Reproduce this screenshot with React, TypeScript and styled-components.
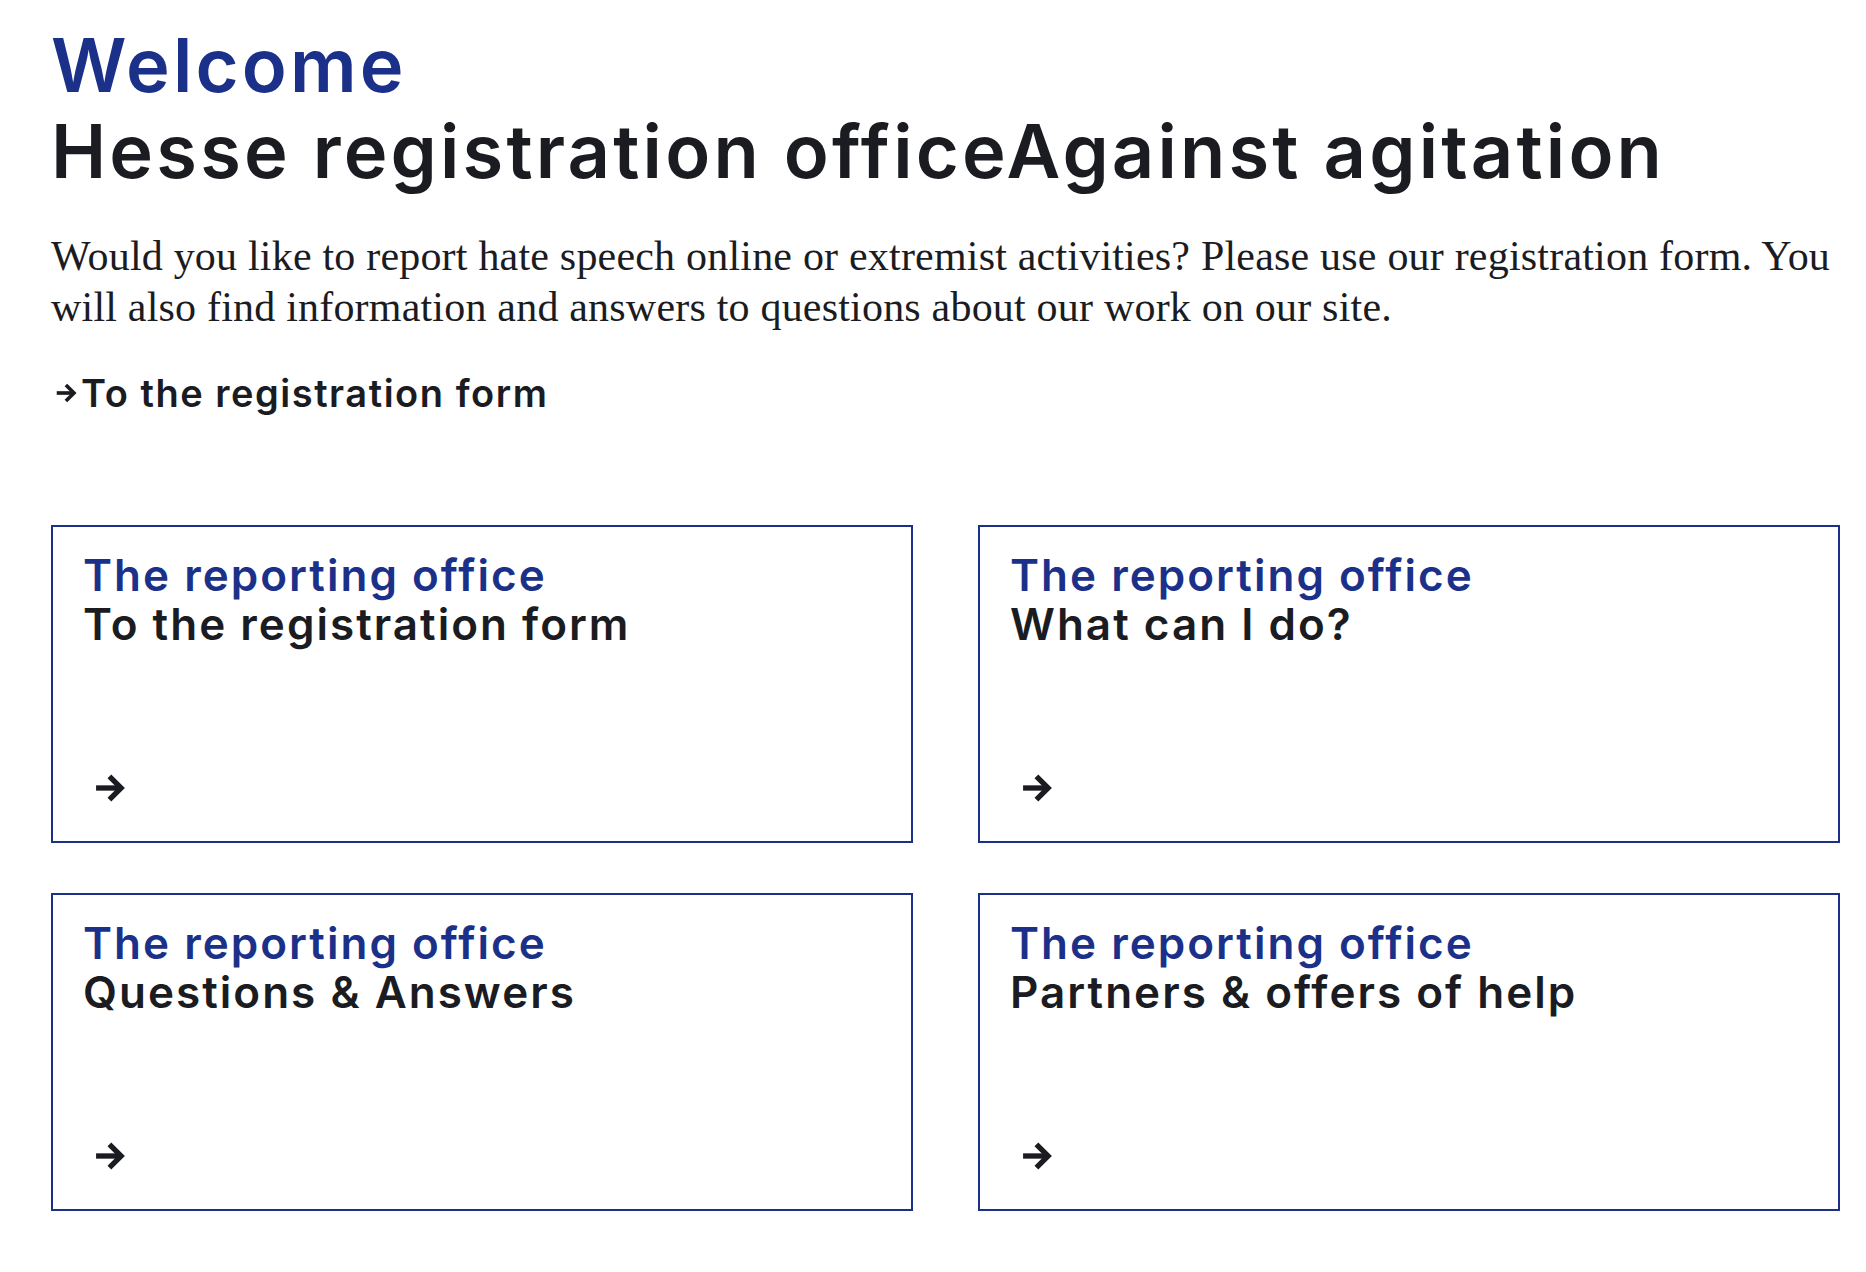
import React from "react";
import styled, {createGlobalStyle} from "styled-components";

const NAVY = "#1b3189";
const INK = "#1b1c21";

const GlobalStyle = createGlobalStyle`
	html, body {
		margin: 0;
		padding: 0;
		background: #ffffff;
	}
	body {
		font-family: Inter, "Liberation Sans", sans-serif;
		color: ${INK};
	}
`

interface Tile {
	id: number;
	title: string;
}

const TILES: Tile[] = [
	{id: 1, title: "To the registration form"},
	{id: 2, title: "What can I do?"},
	{id: 3, title: "Questions & Answers"},
	{id: 4, title: "Partners & offers of help"},
];

const Arrow = ({size = 30}: {size?: number}) => (
	<svg width={size} height={size} viewBox="0 0 30 30" fill="none" xmlns="http://www.w3.org/2000/svg">
		<path d="M1 15H24" stroke={INK} strokeWidth="5"/>
		<path d="M13.5 4L24.5 15L13.5 26" stroke={INK} strokeWidth="5" strokeLinejoin="miter"/>
	</svg>
)

export default function App() {
	return (
		<>
			<GlobalStyle/>
			<Page>
				<Headline>
					<Greeting>Welcome</Greeting>
					<Title>Hesse registration officeAgainst agitation</Title>
				</Headline>
				<Intro>
					Would you like to report hate speech online or extremist activities? Please use our registration form. You
					will also find information and answers to questions about our work on our site.
				</Intro>
				<FormLink href="#">
					<Arrow size={22}/>
					<span>To the registration form</span>
				</FormLink>
				<TileGrid>
					{TILES.map((tile) => (
						<TileCard key={tile.id} href="#">
							<TileHeading>
								<TileKicker>The reporting office</TileKicker>
								<TileTitle>{tile.title}</TileTitle>
							</TileHeading>
							<TileArrow>
								<Arrow size={32}/>
							</TileArrow>
						</TileCard>
					))}
				</TileGrid>
			</Page>
		</>
	)
}

const Page = styled.main`
	box-sizing: border-box;
	width: 1866px;
	padding: 22px 25px 60px 51px;
`

const Headline = styled.h1`
	margin: 0;
	font-weight: 600;
	font-size: 74px;
	line-height: 86px;
	letter-spacing: 0.043em;
`

const Greeting = styled.span`
	display: block;
	color: ${NAVY};
`

const Title = styled.span`
	display: block;
	color: ${INK};
`

const Intro = styled.p`
	margin: 37px 0 0;
	font-family: "Liberation Serif", serif;
	font-size: 42px;
	line-height: 51px;
	letter-spacing: 0.2px;
	color: ${INK};
`

const FormLink = styled.a`
	display: inline-flex;
	align-items: center;
	gap: 3px;
	margin-top: 37px;
	padding-left: 5px;
	font-size: 38px;
	font-weight: 600;
	letter-spacing: 0.04em;
	color: ${INK};
	text-decoration: none;
`

const TileGrid = styled.div`
	display: grid;
	grid-template-columns: 862px 862px;
	column-gap: 65px;
	row-gap: 50px;
	margin-top: 109px;
`

const TileCard = styled.a`
	box-sizing: border-box;
	height: 318px;
	display: flex;
	flex-direction: column;
	justify-content: space-between;
	padding: 24px 30px 37px;
	border: 2px solid ${NAVY};
	text-decoration: none;
`

const TileHeading = styled.div`
	display: flex;
	flex-direction: column;
	font-size: 44px;
	font-weight: 600;
	line-height: 49px;
	letter-spacing: 0.046em;
`

const TileKicker = styled.span`
	color: ${NAVY};
`

const TileTitle = styled.span`
	color: ${INK};
`

const TileArrow = styled.div`
	display: flex;
	padding-left: 12px;
`
